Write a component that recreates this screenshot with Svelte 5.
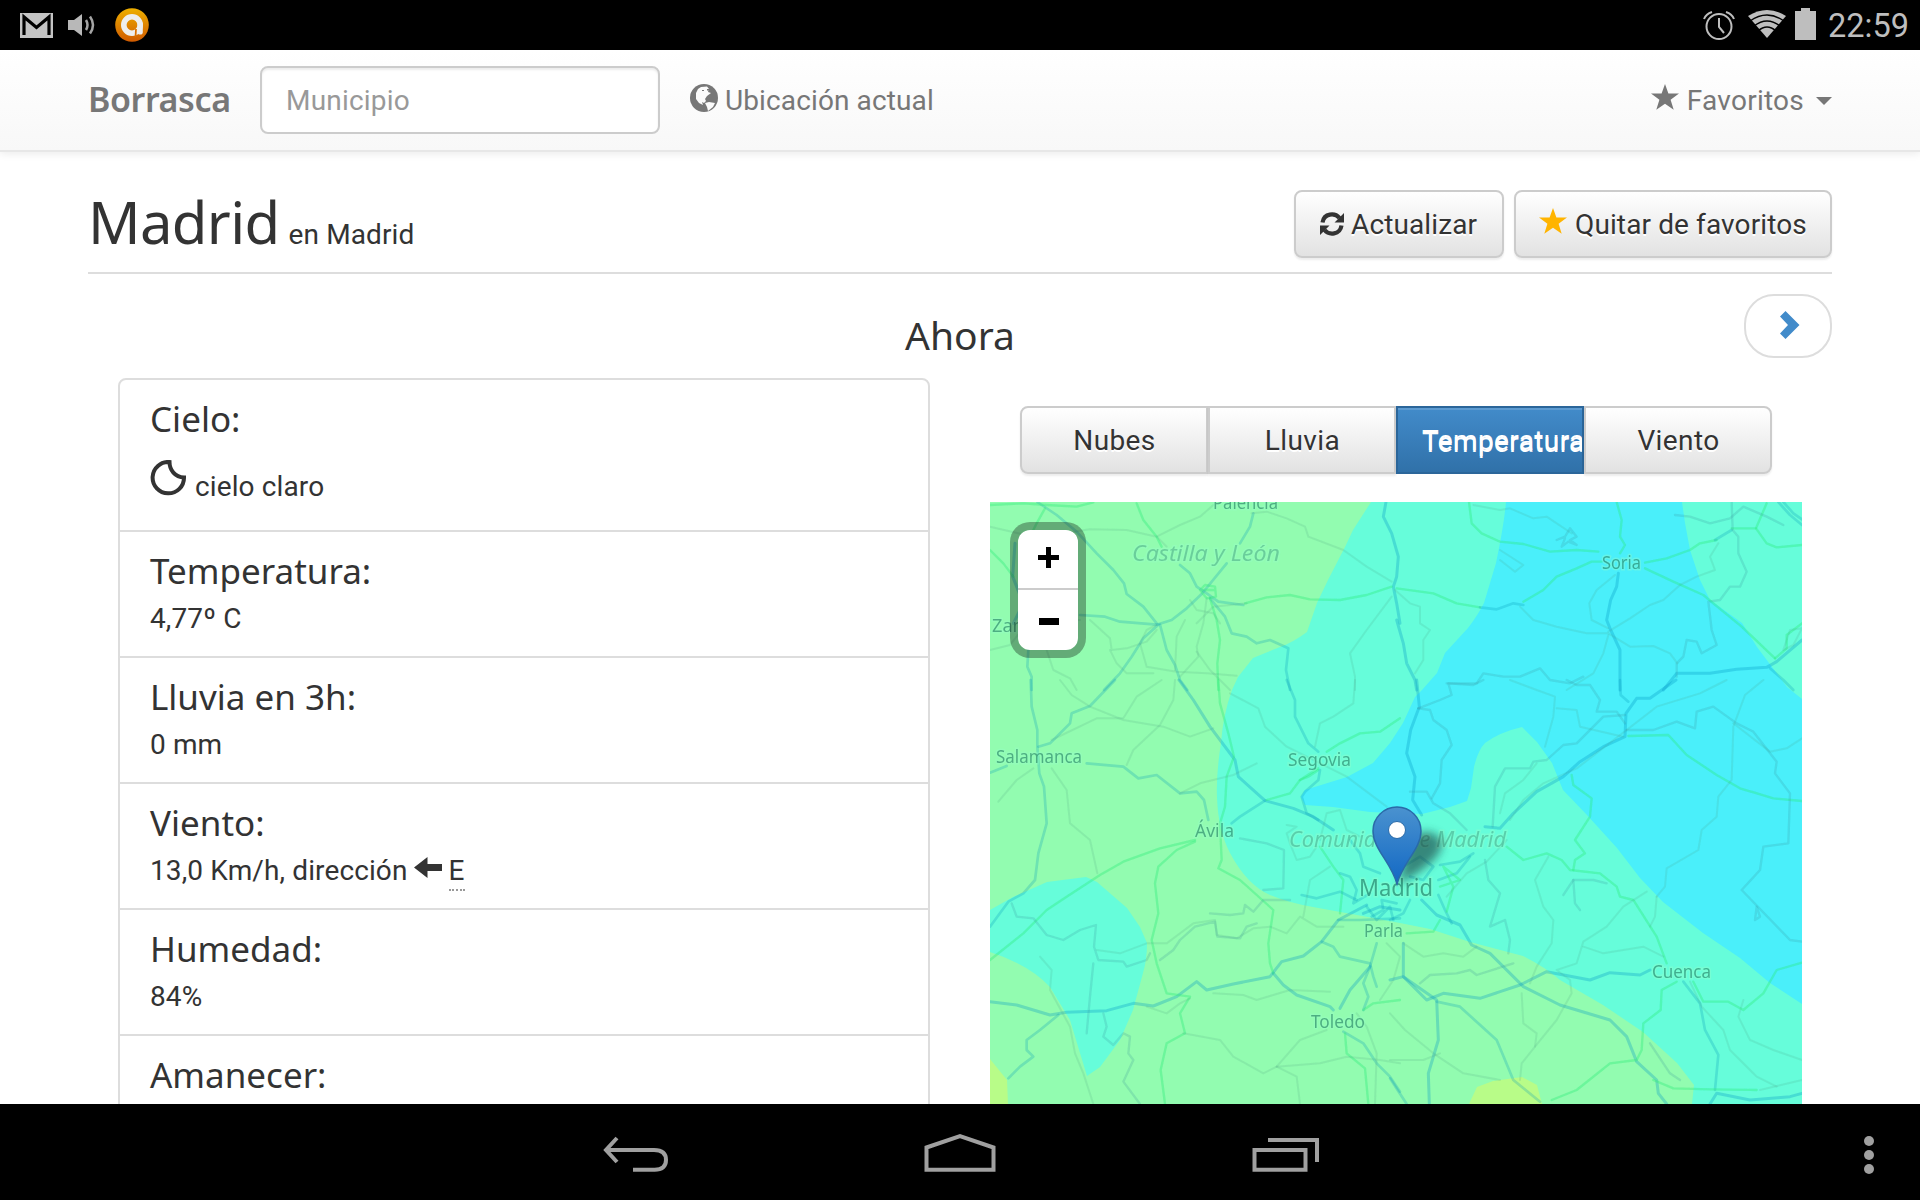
<script>
  const rows = [
    { title: 'Temperatura:', value: '4,77º C' },
    { title: 'Lluvia en 3h:', value: '0 mm' },
    { title: 'Viento:', value: '13,0 Km/h, dirección', wind: 'E' },
    { title: 'Humedad:', value: '84%' },
    { title: 'Amanecer:', value: '' }
  ];
  const layers = ['Nubes', 'Lluvia', 'Temperatura', 'Viento'];
  let active = $state('Temperatura');

  // Road lines, three units per pixel, one group per map tile.
  // kind: w = wide motorway, m = motorway, g = trunk road, s = secondary road, t = border or river
  const tiles = [
    {
      x: 980, y: 390,
      lines: [
        ['m', '172,336 230,375 290,425 350,490 400,540 432,580 440,612 490,650 530,700'],
        ['m', '300,675 375,680 420,695 530,704 575,690 620,655 665,612 740,520'],
        ['m', '535,704 490,745 455,800 420,850 372,900'],
        ['m', '540,704 560,780 585,825 600,870 622,900'],
        ['m', '600,525 630,550 650,590 680,610 715,635 790,645'],
        ['m', '690,625 735,680 755,730 800,740 830,760 870,750 925,775 918,840 930,900'],
        ['m', '145,780 142,830 155,860 155,900'],
        ['w', '1218,336 1210,380 1235,430 1255,500 1250,560 1240,590 1250,640 1260,700'],
        ['w', '105,460 98,560 130,640 100,700'],
        ['m', '820,370 810,410 780,460'],
        ['s', '815,370 860,365 920,385 975,410 985,440 1090,480 1160,530 1235,575'],
        ['s', '530,440 600,405 660,380 700,345'],
        ['s', '30,410 160,440 250,430 330,418 440,420 530,440 560,470'],
        ['g', '470,340 490,390 530,440 545,470'],
        ['g', '795,640 860,622 930,615 990,628 1080,630 1160,615 1235,590'],
        ['g', '30,345 130,340 200,345 290,350 340,337'],
        ['g', '30,480 70,520 100,560'],
        ['g', '195,355 170,400 150,440'],
        ['g', '690,625 710,690 720,750 712,820 715,900'],
        ['s', '680,625 670,700 650,770 655,800 600,860'],
        ['s', '650,785 690,840 750,900'],
        ['s', '530,704 500,720 480,760 500,830 590,845 680,850 770,857'],
        ['s', '330,690 390,745 395,780 440,775 500,755 530,720'],
        ['s', '390,780 410,820 440,850 520,850'],
        ['s', '200,780 220,840 270,865 290,900'],
        ['s', '30,780 90,765 150,690 300,690'],
        ['s', '630,630 650,660 700,670 720,700'],
        ['s', '615,690 590,740 585,840'],
        ['s', '1235,620 1160,720 1110,790 1125,860 1125,900'],
        ['s', '800,640 700,650 650,700'],
        ['g', '660,600 675,585 705,590 708,620 680,625 660,600 705,600']
      ]
    },
    {
      x: 1390, y: 390,
      lines: [
        ['w', '20,690 40,760 50,820 75,870 80,900'],
        ['g', '237,336 245,400 275,430 330,455 400,462 480,485 560,480 625,485'],
        ['g', '20,595 130,610 200,640 270,652'],
        ['m', '270,652 320,658 370,640 400,645'],
        ['g', '400,635 460,600 500,560 560,535 605,515 635,515'],
        ['g', '680,336 695,390 690,440 705,465 690,490'],
        ['g', '765,518 830,505 900,480 930,460 980,450'],
        ['m', '975,450 1025,420'],
        ['g', '1025,415 1098,415 1130,340'],
        ['g', '1098,415 1130,460 1160,472 1236,465'],
        ['m', '1165,336 1200,375 1236,405'],
        ['m', '1180,336 1210,370 1236,388'],
        ['t', '1025,336 1028,420 1045,440 1045,490 1070,545 1050,590 1020,590 990,630 955,635 965,720 980,765 935,790 920,755 890,750 880,800 860,820 860,860'],
        ['g', '765,535 850,575 940,615 1000,665 1055,710 1155,805'],
        ['w', '685,550 680,590 662,630 650,690 660,715 690,780 690,900'],
        ['w', '820,900 860,850 960,850 1040,838 1130,832 1160,815 1236,750'],
        ['m', '1140,835 1180,870 1210,900'],
        ['s', '675,555 620,600 598,640 605,690 655,715'],
        ['s', '655,725 720,685 780,645 820,630 870,585 920,560 975,540 960,500 985,460'],
        ['s', '390,650 430,690 500,710 590,730 655,730 720,770 790,768 840,790 862,820'],
        ['s', '655,735 640,790 610,850 530,900'],
        ['t', '170,880 260,880 280,850 340,860 390,860 450,835 480,870 540,880 580,860'],
        ['s', '250,345 330,360 360,355 430,385 470,380 530,420 545,430'],
        ['t', '855,375 900,380 960,400 1020,385 1060,350 1130,380 1180,405'],
        ['s', '15,600 60,640 90,650 90,700 120,720 100,750 100,810 75,850'],
        ['t', '500,450 525,440 540,415 560,440 540,450 560,465 535,455 515,470 525,445'],
        ['g', '1155,805 1190,775 1190,735 1236,700'],
        ['s', '1180,780 1200,720 1236,715 1210,765 1180,780'],
        ['s', '330,480 400,525 375,545 330,510']
      ]
    },
    {
      x: 980, y: 680,
      lines: [
        ['m', '152,0 155,80 172,150 172,200 178,280 192,320 200,430 175,520 165,600 130,640 85,665 30,740'],
        ['m', '405,0 330,78 275,100 270,130 210,190 175,200'],
        ['m', '30,278 80,258'],
        ['m', '320,250 430,260 475,295 530,285 600,340 650,335 672,360 685,420'],
        ['w', '597,0 640,60 690,140 765,240 775,290 855,362 940,385 1000,410 1060,450'],
        ['m', '855,362 780,410 755,430'],
        ['m', '920,0 945,60 945,110 985,190 1015,215'],
        ['w', '30,965 110,975 210,1005 260,997 380,992 460,970 520,978 590,950 650,905 680,930 760,912 870,890 905,845 970,828 1025,785 1075,720 1160,675'],
        ['w', '880,880 910,915 950,945 1050,980 1060,990'],
        ['m', '1025,785 1060,800 1080,830 1170,850 1180,890 1190,920'],
        ['w', '1170,860 1110,930 1080,985'],
        ['m', '1190,790 1170,860 1150,910 1165,950 1150,990'],
        ['m', '1090,1055 1150,1090 1190,1150 1230,1190 1260,1235'],
        ['m', '235,1005 180,1050 140,1080 140,1110 160,1130 120,1160 85,1195'],
        ['g', '715,0 720,70 745,160 762,230 740,290 735,380 720,430 725,540 715,565 780,600 880,690 865,790 870,850 880,880'],
        ['g', '645,480 540,505 430,545 360,585 260,650 200,690 130,760 30,840'],
        ['g', '645,485 590,510 535,560 525,610 535,700 515,780 530,850 560,940 630,950 600,1000 615,1060 560,1090 542,1170 555,1272'],
        ['g', '1260,115 1200,155 1140,160 1080,190 1040,215'],
        ['g', '1015,265 960,300 930,340 860,360'],
        ['g', '960,300 985,290 1015,270'],
        ['g', '1150,990 1180,970 1260,960'],
        ['g', '1095,1060 1100,1120 1155,1165 1165,1272'],
        ['g', '1020,500 1060,560 1090,600 1080,700'],
        ['m', '965,645 1010,655 1080,635 1130,660'],
        ['t', '850,630 910,625 912,510 860,490 780,475'],
        ['m', '1020,270 1015,300 975,335 965,350 980,400 1015,420'],
        ['m', '1110,480 1140,520 1150,560 1200,580'],
        ['m', '1080,580 1110,590 1130,630 1120,670 1170,640'],
        ['w', '1150,700 1200,680 1260,690'],
        ['m', '1160,680 1190,720 1230,680 1240,720'],
        ['m', '1175,710 1210,690 1205,660 1250,670'],
        ['m', '1075,720 1140,720 1260,715'],
        ['t', '95,670 110,710 160,715 200,765 250,780 300,750 348,735 342,800 355,840 430,845 440,860 500,840 510,820'],
        ['t', '340,850 330,950 320,1060'],
        ['t', '370,1000 380,1040 370,1070 400,1095 430,1060 450,1070 445,1120 460,1140 430,1205 480,1272'],
        ['s', '240,0 275,45 330,80 430,120 550,140 630,170 700,145'],
        ['s', '585,0 580,60 540,135 460,210 440,255'],
        ['s', '545,0 470,50 430,115 350,115 215,180'],
        ['s', '215,265 260,330 270,430 330,480 352,580'],
        ['s', '160,265 110,300 55,365'],
        ['s', '750,40 835,85 855,140 920,200 980,230 1100,290 1180,350 1220,380'],
        ['s', '1125,0 1120,70 1060,110 1020,130 1005,200'],
        ['s', '350,810 420,820 500,790 560,790 640,730 705,720 710,765 770,775 820,745 870,740 920,760 960,710 1010,740 1090,740'],
        ['t', '540,840 580,810 600,780 645,740 705,725 712,770 780,775 800,740 830,730'],
        ['t', '690,700 750,705 790,700 795,675 820,695 850,660 930,660'],
        ['s', '180,830 215,870 210,930 270,1040 285,1120 310,1180 340,1272'],
        ['s', '610,1060 720,1080 760,1130 850,1180 890,1160 960,1080 1040,1050'],
        ['s', '890,1160 1020,1150 1100,1130 1200,1140 1260,1150'],
        ['s', '890,1160 950,1190 960,1272'],
        ['s', '700,940 790,945 830,960 930,930 1050,935'],
        ['s', '500,980 560,1000 600,970 630,955'],
        ['s', '600,340 660,310 760,285 830,250'],
        ['s', '970,710 990,600 1050,560'],
        ['s', '1130,1000 1160,1040 1190,1120 1185,1272'],
        ['s', '1220,790 1260,830 1240,900 1200,960'],
        ['s', '920,435 950,440 920,460 930,490 950,540 990,530 1010,500'],
        ['s', '1020,480 1040,400 1080,390 1100,450 1140,470']
      ]
    },
    {
      x: 1390, y: 680,
      lines: [
        ['w', '80,0 88,80 62,150 50,220 75,290 68,360 95,405'],
        ['t', '85,85 120,90 130,120 170,150 185,195 155,240 150,310 125,355'],
        ['t', '85,85 150,60 185,45 175,10 250,15 280,0'],
        ['w', '858,0 780,55 740,55 708,100 705,170 640,200 570,245 520,290 440,335 370,400 330,445 285,440'],
        ['s', '1010,0 930,40 800,80 710,150 560,265 460,310 400,360 360,420'],
        ['t', '705,105 640,110 560,190 520,195 470,240 430,245 420,265 345,265 315,320 308,440'],
        ['m', '690,0 692,45 715,65'],
        ['t', '530,0 560,15 600,15 630,60 620,95 680,95 705,130'],
        ['g', '715,168 835,165 890,225 980,285 1050,325 1150,355 1236,363'],
        ['t', '710,150 790,150 860,125 915,145 920,95 970,80 1040,130 1090,155 1160,245 1155,280 1200,340 1195,490 1120,500 1110,570 1055,630 1200,780 1236,785'],
        ['s', '1120,0 1065,45 1030,140 1025,300 985,350 980,410 935,450 925,510 830,565 825,620 800,650'],
        ['s', '1030,130 1140,215 1190,205 1236,175'],
        ['s', '360,0 440,30 495,50 490,110 465,200'],
        ['s', '500,85 560,90 570,140 700,170'],
        ['g', '545,285 550,315 605,355 600,410 555,480 585,520 555,540 550,570'],
        ['g', '350,500 400,540 470,520 515,540 540,570 630,580 680,620 690,650 730,660 800,770 830,850'],
        ['w', '0,900 40,890 110,960 160,940 270,955 390,915 470,875 600,900 660,878 750,885 780,870'],
        ['w', '95,660 140,705 210,735 245,795 300,820 400,920 510,975 560,990 660,1020 710,1070 740,1145 800,1200 805,1240 830,1272'],
        ['w', '40,790 40,890 140,960 145,1080 115,1180 118,1272'],
        ['m', '140,965 210,980 320,1080 370,1200 450,1265'],
        ['w', '960,1272 980,1240 1080,1260 1200,1250 1236,1240'],
        ['m', '880,905 930,970 945,1050 985,1125 975,1230'],
        ['s', '900,905 935,980 1000,1050 1020,1110 1100,1190 1160,1220'],
        ['s', '1060,960 1045,1010 1080,1080 1150,1110 1236,1140'],
        ['g', '860,905 815,930 812,990 760,1030 755,1110 740,1140 660,1150 560,1230 485,1260'],
        ['g', '910,905 940,965 1015,965 1060,990 1120,940 1160,870 1236,848'],
        ['g', '790,1200 850,1225 960,1228 1100,1230'],
        ['m', '0,720 40,700 60,660'],
        ['m', '150,555 210,545 250,520'],
        ['m', '145,600 200,580 240,530'],
        ['m', '145,645 165,690 185,730'],
        ['m', '40,560 90,530 130,560 100,600 60,590'],
        ['g', '170,695 190,620 160,560 210,600 150,620'],
        ['s', '170,650 230,580 290,545 350,480'],
        ['t', '285,540 295,600 330,640 300,740 345,720 360,780 355,820'],
        ['s', '475,530 435,600 460,680 490,720 485,790 440,860 420,910'],
        ['s', '800,650 795,710 780,740'],
        ['s', '770,635 700,680 650,740 580,785 560,850 500,870 540,900 545,940 500,1020 435,1100 395,1150 390,1200'],
        ['s', '580,800 640,820 760,800 820,830'],
        ['s', '395,940 400,1030 440,1060 435,1100'],
        ['t', '90,910 120,885 200,880 240,870 260,885 370,850'],
        ['s', '40,790 100,830 160,820 220,830 260,800'],
        ['s', '0,1000 45,1050 130,1120 220,1180 330,1200'],
        ['s', '0,1140 100,1140 150,1120'],
        ['g', '50,760 130,755 150,720'],
        ['m', '0,1195 50,1272'],
        ['t', '60,335 110,335 130,370 180,400 230,450'],
        ['s', '330,400 345,340 400,300 440,250'],
        ['t', '520,645 550,600 610,600 650,610'],
        ['t', '550,600 555,670 570,690'],
        ['t', '780,1090 840,1180 870,1200'],
        ['t', '1100,680 1110,710 1095,720 1100,680'],
        ['s', '1110,1230 1236,1200']
      ]
    }
  ];

  const labels = [
    { t: 'Palencia', x: 1213, y: 509, w: 65, s: 18, c: 'town' },
    { t: 'Castilla y León', x: 1132, y: 561, w: 148, s: 22, c: 'region' },
    { t: 'Zamora', x: 992, y: 632, w: 66, s: 18, c: 'town' },
    { t: 'Soria', x: 1602, y: 569, w: 39, s: 18, c: 'town' },
    { t: 'Salamanca', x: 996, y: 763, w: 86, s: 18, c: 'town' },
    { t: 'Segovia', x: 1288, y: 766, w: 63, s: 18, c: 'town' },
    { t: 'Ávila', x: 1195, y: 837, w: 39, s: 18, c: 'town' },
    { t: 'Comunidad de Madrid', x: 1289, y: 847, w: 217, s: 22, c: 'region' },
    { t: 'Madrid', x: 1359, y: 896, w: 74, s: 23, c: 'city' },
    { t: 'Parla', x: 1364, y: 937, w: 39, s: 18, c: 'town' },
    { t: 'Toledo', x: 1311, y: 1028, w: 54, s: 18, c: 'town' },
    { t: 'Cuenca', x: 1652, y: 978, w: 59, s: 18, c: 'town' }
  ];
</script>

{#snippet star()}
  <svg class="star" viewBox="0 0 28 26"><path d="M14 0l3.4 9.6H28l-8.4 6.2 3.1 10L14 19.7 5.3 25.800 8.400 15.800 0 9.600h10.600z" /></svg>
{/snippet}

<div class="screen">
  <div class="status">
    <svg class="mail" viewBox="0 0 33 25"><path fill="#c4c4c4" d="M0 0h33v25H0z" /><path d="M4 22V4l12.500 10.500L29 4v18" fill="none" stroke="#000" stroke-width="3.200" /></svg>
    <svg class="speaker" viewBox="0 0 27 22"><path fill="#b8b8b8" d="M0 6h6l8-6v22l-8-6H0z" /><path d="M18 6q3 5 0 10M22 2.500q6 8.500 0 17" fill="none" stroke="#a5a5a5" stroke-width="2.500" /></svg>
    <svg class="avast" viewBox="0 0 34 34">
      <defs><linearGradient id="orange" x2="0" y2="1"><stop offset="0" stop-color="#eeb000" /><stop offset="1" stop-color="#d05a00" /></linearGradient></defs>
      <circle cx="17" cy="17" r="16.800" fill="url(#orange)" />
      <g fill="none" stroke="#eee"><circle cx="17" cy="17" r="8.200" stroke-width="5.600" /><path d="M25.200 16v8" stroke-width="5.200" stroke-linecap="round" /></g>
      <path d="M20.500 29l.5-8" stroke="#da7000" stroke-width="1.800" />
    </svg>
    <div class="space"></div>
    <svg class="alarm" viewBox="0 0 32 30" fill="none" stroke="#bebebe" stroke-width="2"><circle cx="16" cy="16.500" r="12.500" /><path d="M16 8v9l5 6M1 9Q3 4 9 2M31 9Q29 4 23 2" /></svg>
    <svg class="wifi" viewBox="0 0 38 28"><path fill="#bebebe" d="M0 6Q19-6 38 6L19 28z" /><path d="M2 11Q19-1 36 11M6 16Q19 6 32 16M10 21Q19 13 28 21" fill="none" stroke="#000" stroke-width="1.400" /></svg>
    <svg class="battery" viewBox="0 0 21 32"><path fill="#bebebe" d="M6 0h9v3h6v29H0V3h6z" /></svg>
    <span class="clock">22:59</span>
  </div>

  <nav>
    <span class="brand">Borrasca</span>
    <input placeholder="Municipio" />
    <span class="locate">
      <svg class="globe" viewBox="0 0 28 28"><circle cx="14" cy="14" r="14" /><path fill="#fbfbfb" d="M8 5l3-2 6-.500 2 2.500-1 3 3 1-4 3-2 3 1 2-2 2-2-1 1 3-4-2-3-4 0-6zM15 19l4-1 6 1-2 4-5 4-1-4z" /><path d="M12 6h2v1h-2zM17 5h2v1.500h-2z" /></svg>
      <span>Ubicación actual</span>
    </span>
    <span class="favs">{@render star()}<span>Favoritos</span><i class="caret"></i></span>
  </nav>

  <main>
    <header>
      <div class="title"><h1>Madrid</h1><span>en Madrid</span></div>
      <button class="btn refresh">
        <svg viewBox="0 0 24 24"><g fill="none" stroke="#333" stroke-width="4.200"><path d="M2.500 10.500C4 1 15 .500 19.500 6" /><path d="M21.500 13.500C20 23 9 23.500 4.500 18" /></g><path fill="#333" d="M24 1v9.500h-9.500zM0 23v-9.500h9.500z" /></svg>
        <span>Actualizar</span>
      </button>
      <button class="btn fav">{@render star()}<span>Quitar de favoritos</span></button>
    </header>

    <div class="period">
      <h2>Ahora</h2>
      <a class="next" href="#next" aria-label="Siguiente"><svg viewBox="0 0 20 28"><path fill="#428bca" d="M5.500 0L19.500 14 5.500 28 0 22.500 8 14 0 5.500z" /></svg></a>
    </div>

    <div class="columns">
      <section class="panel">
        <div class="row sky">
          <h3>Cielo:</h3>
          <p><svg class="moon" viewBox="0 0 36 36"><path d="M19.500 2A15.700 15.700 0 1 0 34 17.500C25 17 19.500 10 19.500 2z" fill="none" stroke="#333" stroke-width="4" /></svg><span>cielo claro</span></p>
        </div>
        {#each rows as row}
          <div class="row">
            <h3>{row.title}</h3>
            {#if row.value}
              <p>{row.value}{#if row.wind}<svg class="arrow" viewBox="0 0 28 21"><path fill="#333" d="M0 10.500L13.500 0v7H28v7H13.500v7z" /></svg><abbr title="Este">{row.wind}</abbr>{/if}</p>
            {/if}
          </div>
        {/each}
      </section>

      <section class="side">
        <div class="group">
          {#each layers as layer}
            <button class="btn" class:active={active === layer} onclick={() => (active = layer)}>{layer}</button>
          {/each}
        </div>
        <div class="map">
          <svg class="canvas" viewBox="990 502 812 602">
            <defs>
              <linearGradient id="pin" x2="0" y2="1"><stop offset="0" stop-color="#4a92cf" /><stop offset="1" stop-color="#1268c4" /></linearGradient>
              <filter id="soft" x="-50%" y="-50%" width="200%" height="200%"><feGaussianBlur stdDeviation="5" /></filter>
              <filter id="smooth"><feGaussianBlur stdDeviation=".7" /></filter>
            </defs>
            <path fill="#92fcb0" d="M990 502h812v602H990z" />
            <path fill="#66fdda" d="M1371 502L1353 530 1345 547 1328 580 1317 603 1307 632Q1292 643 1280 647L1253 658 1238 677 1232 690Q1223 715 1221 743 1216 775 1217 797 1218 830 1230 853 1247 885 1270 895 1290 903 1313 907L1357 915 1400 923 1430 929 1470 942 1523 956Q1545 967 1560 980L1603 1005 1643 1032 1677 1063 1694 1085 1692 1104H1802V502z" />
            <path fill="#4aeffa" d="M1506 502Q1504 525 1496 563L1484 603Q1478 615 1468 628L1445 653 1437 673 1422 690 1415 697 1403 723 1390 743 1373 763 1347 777 1305 790 1301 797 1305 805 1333 807 1370 812 1422 814 1450 807 1467 801 1471 788 1474 767Q1478 750 1485 743 1500 732 1522 727L1537 742 1552 763 1563 790 1587 815 1617 848 1640 878 1663 902 1703 933 1740 958 1770 983 1802 1004V699L1787 687 1772 667 1757 647 1742 623 1710 600 1700 580 1690 550 1685 523 1682 502z" />
            <path fill="#66fdda" d="M990 910L1013 897 1047 882 1086 877 1097 882 1127 908 1140 927 1147 943Q1147 960 1143 973L1133 1010 1120 1040 1100 1067 1087 1076 1080 1053 1070 1020 1050 987Q1030 965 990 952z" />
            <path fill="#b8fc88" d="M990 1059L1007 1080 1008 1104H990zM1469 1104L1477 1087 1493 1081 1522 1077 1537 1085 1542 1104z" />
            <g filter="url(#smooth)">
              {#each tiles as tile}
                <g transform="translate({tile.x} {tile.y}) scale(.33333)">
                  {#each tile.lines as line}<polyline class="road {line[0]}" points={line[1]} />{/each}
                </g>
              {/each}
            </g>
            {#each labels as l}
              <text class={l.c} x={l.x} y={l.y} font-size={l.s} textLength={l.w} lengthAdjust="spacingAndGlyphs">{l.t}</text>
            {/each}
            <path d="M1399 884L1408 842Q1425 824 1440 838 1450 856 1399 884z" fill="#153a3c" opacity=".6" filter="url(#soft)" />
            <path d="M1397 884C1391 862 1373 849 1373 831a24 24 0 0 1 48 0C1421 849 1403 862 1397 884z" fill="url(#pin)" stroke="#2a6aa8" stroke-width="1.500" />
            <circle cx="1397" cy="830" r="8.500" fill="#fff" stroke="#2a6aa8" />
          </svg>
          <div class="zoom"><button aria-label="Acercar"><i class="bar"></i><i class="bar up"></i></button><button aria-label="Alejar"><i class="bar less"></i></button></div>
        </div>
      </section>
    </div>
  </main>

  <footer>
    <svg viewBox="0 0 1920 96" fill="none" stroke="#a0a0a0" stroke-width="4">
      <path d="M617 34l-11 12 11 12M607 46h47q12 0 12 10T654 65.700H633" />
      <path d="M926.500 43.500L960 32l33.500 11.500v22.200h-67z" />
      <path d="M1254.500 46h51v19.700h-51zM1268 36h49v22" />
      <g fill="#a0a0a0" stroke="none"><circle cx="1869" cy="37" r="5" /><circle cx="1869" cy="51" r="5" /><circle cx="1869" cy="65" r="5" /></g>
    </svg>
  </footer>
</div>

<style>
  :global(body) { margin: 0; background: #fff; }
  * { box-sizing: border-box; }
  svg { display: block; flex: none; }
  .screen { width: 1920px; height: 1200px; display: flex; flex-direction: column; overflow: hidden; background: #fff; color: #333; font: 28px/40px Roboto, sans-serif; letter-spacing: .12px; }
  .status { height: 50px; flex: none; background: #000; display: flex; align-items: center; padding: 0 13px 0 20px; }
  .mail { width: 33px; height: 25px; margin-right: 15px; }
  .speaker { width: 27px; height: 22px; margin-right: 20px; }
  .avast { width: 34px; height: 34px; }
  .space { flex: 1; }
  .alarm { width: 32px; height: 30px; margin-right: 13px; }
  .wifi { width: 38px; height: 28px; margin: 0 9px 2px 0; }
  .battery { width: 21px; height: 32px; margin: 0 12px 2px 0; }
  .clock { color: #bebebe; font-size: 32.5px; letter-spacing: 0; width: 79px; white-space: nowrap; padding-top: 2px; }

  nav { height: 102px; flex: none; display: flex; align-items: center; padding: 0 88px; background: linear-gradient(#fff, #f8f8f8); border-bottom: 2px solid #e7e7e7; box-shadow: 0 2px 8px rgba(0, 0, 0, .08); color: #777; }
  .brand { width: 172px; font: 600 34px/40px "Noto Sans", sans-serif; letter-spacing: -.4px; padding: 0 0 3px 0; }
  input { width: 400px; height: 68px; border: 2px solid #ccc; border-radius: 8px; padding: 0 24px; font: 28px Roboto, sans-serif; letter-spacing: .2px; background: #fff; box-shadow: inset 0 2px 2px rgba(0, 0, 0, .075); outline: 0; }
  input::placeholder { color: #999; opacity: 1; }
  .locate { display: flex; align-items: center; margin-left: 30px; gap: 7px; }
  .locate span, .favs span { padding-top: 2px; }
  .globe { width: 28px; height: 28px; fill: #777; margin-bottom: 4px; }
  .favs { display: flex; align-items: center; margin-left: auto; letter-spacing: .25px; }
  .star { width: 28px; height: 26px; fill: #777; margin: 0 8px 6px 0; }
  .caret { border: 8px solid transparent; border-top-color: #777; border-bottom: 0; margin: 2px 0 0 12px; }

  main { flex: 1; min-height: 0; overflow: hidden; }
  header { height: 122px; margin: 0 88px; padding-top: 38px; border-bottom: 2px solid #ddd; display: flex; align-items: flex-start; gap: 10px; }
  .title { flex: 1; display: flex; align-items: baseline; gap: 9px; padding-top: 1px; }
  h1, h2, h3 { margin: 0; font-family: "Noto Sans", sans-serif; font-weight: 400; letter-spacing: 0; }
  h1 { font-size: 58px; line-height: 62px; letter-spacing: -.65px; }
  .btn { height: 68px; border: 2px solid #ccc; border-radius: 8px; background: linear-gradient(#fff, #e2e2e2); box-shadow: 0 2px 2px rgba(0, 0, 0, .075); color: #333; font: 28px/40px Roboto, sans-serif; letter-spacing: .12px; text-shadow: 0 2px 0 #fff; display: flex; align-items: center; white-space: nowrap; padding: 2px 24px 0; }
  .refresh { width: 210px; }
  .refresh svg { width: 24px; height: 24px; margin: 0 7px 2px 0; }
  .fav { width: 318px; padding: 2px 23px 0; }
  .fav :global(.star) { fill: #ffb400; margin-bottom: 8px; }

  .period { height: 104px; margin: 0 88px; display: grid; grid-template-columns: 1fr auto 1fr; align-items: start; }
  h2 { grid-column: 2; font-size: 39px; line-height: 44px; margin-top: 39px; }
  .next { justify-self: end; width: 88px; height: 64px; margin-top: 20px; border: 2px solid #ddd; border-radius: 30px; display: flex; align-items: center; justify-content: center; }
  .next svg { width: 20px; height: 28px; margin: 0 0 2px 4px; }

  .columns { display: grid; grid-template-columns: 812px 812px; gap: 60px; padding: 0 118px; align-items: start; }
  .panel { border: 2px solid #ddd; border-radius: 8px; }
  .row { height: 126px; padding: 19px 30px 0; border-bottom: 2px solid #ddd; }
  h3 { font-size: 35px; line-height: 40px; margin-bottom: 8px; }
  p { margin: 0; display: flex; align-items: center; height: 40px; }
  .sky { height: 152px; }
  .sky h3 { margin-bottom: 28px; }
  .moon { width: 36px; height: 36px; margin: 0 9px 18px 0; }
  .arrow { width: 28px; height: 21px; margin: 0 7px 8px 6px; }
  abbr { text-decoration: none; border-bottom: 2px dotted #999; line-height: 40px; height: 40px; }

  .group { display: grid; grid-template-columns: repeat(4, 1fr); margin: 28px 30px; }
  .group .btn { border-radius: 0; justify-content: center; overflow: hidden; letter-spacing: .4px; padding-left: 25px; }
  .group .btn:first-child { border-radius: 8px 0 0 8px; }
  .group .btn:last-child { border-radius: 0 8px 8px 0; }
  .group .active { justify-content: flex-start; color: #fff; background: linear-gradient(#428bca, #3071a9); border-color: #2b669a; box-shadow: inset 0 2px 0 rgba(255, 255, 255, .15); padding-left: 24px; }

  .map { position: relative; height: 602px; }
  .canvas { width: 812px; height: 602px; }
  .road { fill: none; stroke-linejoin: round; stroke-linecap: round; }
  .m { stroke: rgba(10, 150, 185, .25); stroke-width: 8; }
  .w { stroke: rgba(10, 150, 195, .3); stroke-width: 9; }
  .g { stroke: rgba(40, 235, 120, .36); stroke-width: 7; }
  .s { stroke: rgba(70, 150, 120, .15); stroke-width: 6; }
  .t { stroke: rgba(50, 140, 150, .2); stroke-width: 7; }
  text { font-family: "Noto Sans", sans-serif; letter-spacing: 0; paint-order: stroke; stroke: rgba(150, 255, 200, .35); stroke-width: 3px; }
  .town { fill: rgba(20, 110, 85, .55); }
  .city { fill: rgba(20, 110, 90, .6); }
  .region { fill: rgba(50, 140, 115, .42); font-style: italic; }

  .zoom { position: absolute; left: 20px; top: 20px; border: 8px solid rgba(0, 0, 0, .32); border-radius: 20px; background: #fff; background-clip: padding-box; width: 76px; height: 136px; display: flex; flex-direction: column; }
  .zoom button { height: 60px; border: 0; background: none; padding: 0; display: grid; place-items: center; }
  .zoom button:first-child { border-bottom: 2px solid #ccc; padding-bottom: 3px; }
  .bar { grid-area: 1 / 1; width: 21px; height: 5px; background: #000; }
  .up { transform: rotate(90deg); }
  .less { height: 7px; width: 20px; margin: 3px 0 0 1px; }

  footer { height: 96px; flex: none; background: #000; }
  footer svg { width: 1920px; height: 96px; }
</style>
